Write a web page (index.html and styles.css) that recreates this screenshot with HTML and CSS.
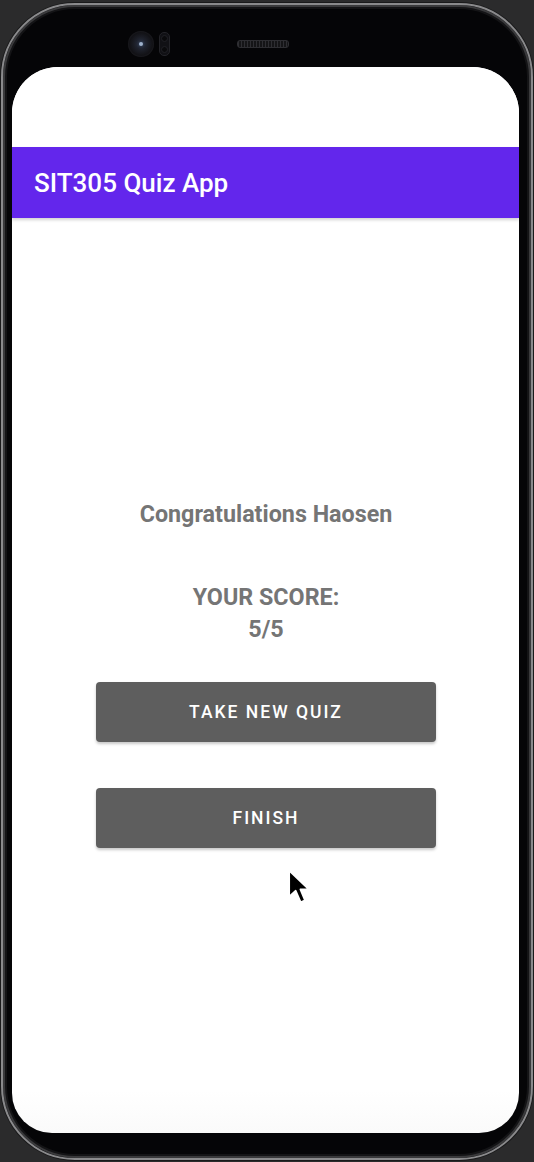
FILE: index.html
```html
<!DOCTYPE html>
<html>
<head>
<meta charset="utf-8">
<link rel="stylesheet" href="styles.css">
</head>
<body>
<div class="phone">
  <div class="bezel">
    <div class="camera"><div class="lens"></div></div>
    <div class="sensor"><span></span><span></span></div>
    <div class="speaker"></div>
  </div>
  <div class="screen">
    <div class="status"></div>
    <div class="appbar">SIT305 Quiz App</div>
    <div class="content">
      <div class="congrats">Congratulations Haosen</div>
      <div class="score">YOUR SCORE:<br>5/5</div>
      <div class="buttons">
        <button class="btn">TAKE NEW QUIZ</button>
        <button class="btn">FINISH</button>
      </div>
    </div>
    <svg class="cursor" width="24" height="40" viewBox="0 0 22 36">
      <path d="M2 2 L2 26 L8 20.5 L12.5 31 L16.5 29.3 L12.3 19.2 L20 19.2 Z" fill="#000" stroke="#fff" stroke-width="1.6" stroke-linejoin="round"/>
    </svg>
  </div>
</div>
</body>
</html>
```

FILE: styles.css
```css
html, body {
  margin: 0;
  padding: 0;
  background: #2b2b2c;
  width: 534px;
  height: 1162px;
  overflow: hidden;
}

.phone {
  box-sizing: border-box;
  width: 532px;
  height: 1157px;
  margin: 3px 0 0 1px;
  border-radius: 74px;
  background: #050507;
  border: 2px solid #8a8a8c;
  box-shadow: inset 0 0 0 2px #3a3a3c, inset 0 0 0 4px #141416, 0 0 0 1px #1a1a1b;
  padding: 0 12px 25px 9px;
  display: flex;
  flex-direction: column;
}

.bezel {
  height: 62px;
  display: flex;
  align-items: center;
  padding-left: 116px;
  padding-top: 15px;
  box-sizing: border-box;
}

.camera {
  width: 26px;
  height: 26px;
  border-radius: 50%;
  background: radial-gradient(circle at 50% 50%, #2a3244 0, #1a1c24 40%, #121216 62%, #25252a 85%, #151517 100%);
  display: flex;
  align-items: center;
  justify-content: center;
}

.lens {
  width: 4px;
  height: 4px;
  border-radius: 50%;
  background: #9fb2cc;
  box-shadow: 0 0 3px #3c5070;
}

.sensor {
  margin-left: 5px;
  width: 9px;
  height: 22px;
  border-radius: 5px;
  background: #111115;
  border: 1px solid #232328;
  display: flex;
  flex-direction: column;
  justify-content: space-around;
  align-items: center;
}

.sensor span {
  width: 7px;
  height: 7px;
  border-radius: 50%;
  background: #0a0a0c;
  border: 1px solid #202025;
  box-sizing: border-box;
}

.speaker {
  margin-left: 67px;
  width: 50px;
  height: 6px;
  border-radius: 3px;
  background: repeating-linear-gradient(90deg, #2e2e32 0 1px, #151517 1px 3px);
  border: 1px solid #2e2e32;
}

.screen {
  position: relative;
  flex: 1;
  background: linear-gradient(180deg, #ffffff 0, #ffffff 96%, #fafafa 100%);
  border-radius: 46px 46px 40px 40px;
  overflow: hidden;
  display: flex;
  flex-direction: column;
}

.status {
  height: 80px;
  background: #ffffff;
}

.appbar {
  height: 71px;
  background: #6326ec;
  color: #ffffff;
  font-family: Roboto, "Liberation Sans", sans-serif;
  font-size: 26px;
  font-weight: 500;
  display: flex;
  align-items: center;
  padding-left: 22px;
  box-shadow: 0 2px 3px rgba(0, 0, 0, 0.18);
  position: relative;
}

.content {
  display: flex;
  flex-direction: column;
  align-items: center;
  font-family: Roboto, "Liberation Sans", sans-serif;
  color: #757575;
  font-weight: 700;
  padding-left: 1px;
}

.congrats {
  margin-top: 281px;
  font-size: 23.3px;
  line-height: 30px;
}

.score {
  margin-top: 52px;
  font-size: 23.3px;
  line-height: 32px;
  text-align: center;
}

.buttons {
  margin-top: 37px;
  display: flex;
  flex-direction: column;
  gap: 46px;
}

.btn {
  width: 340px;
  height: 60px;
  border: none;
  border-radius: 4px;
  background: #5e5e5e;
  color: #ffffff;
  font-family: Roboto, "Liberation Sans", sans-serif;
  font-size: 17.5px;
  font-weight: 500;
  letter-spacing: 2px;
  box-shadow: 0 2px 3px rgba(0, 0, 0, 0.22);
  padding: 0;
}

.cursor {
  position: absolute;
  left: 275px;
  top: 801px;
}
```
